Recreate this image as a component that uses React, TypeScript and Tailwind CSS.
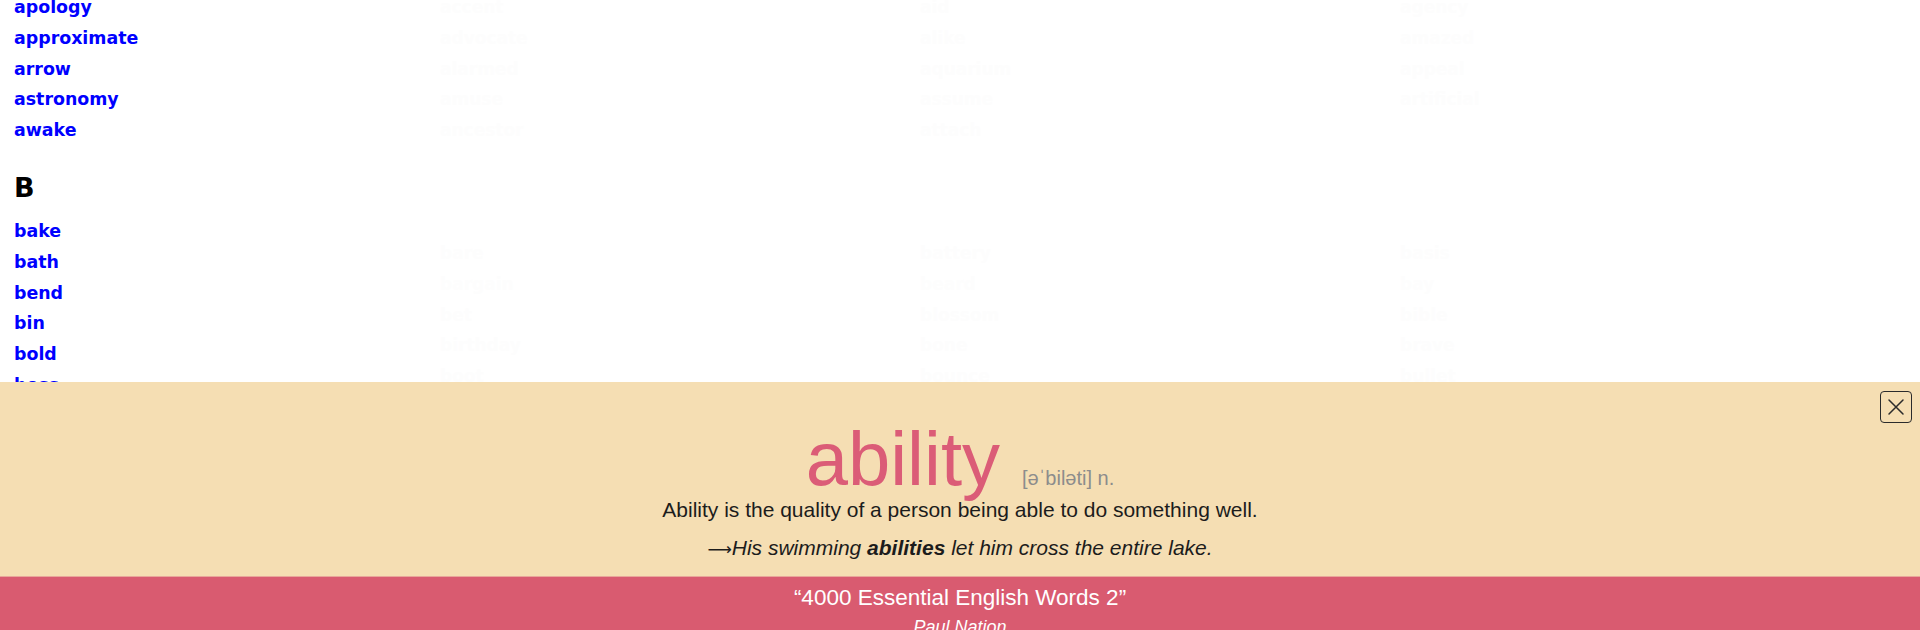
import React from "react";

const aWords = ["apology", "approximate", "arrow", "astronomy", "awake"];
const bWords = ["bake", "bath", "bend", "bin", "bold", "boss", "bother", "bounce", "brick"];

// very faint words behind the page (a washed-out watermark)
const ghostCols = [
  ["accent", "advocate", "alarmed", "amuse", "ancestor", "", "", "", "bare", "bargain", "bet", "birthday", "boot"],
  ["aid", "alike", "aquarium", "assume", "attach", "", "", "", "battery", "beard", "blossom", "bone", "bounce"],
  ["agency", "amazed", "appeal", "artificial", "", "", "", "", "basis", "bay", "bible", "brave", "bullet"],
];

function CloseIcon() {
  return (
    <svg width="18" height="18" viewBox="0 0 18 18" fill="none">
      <path d="M2 2L16 16M16 2L2 16" stroke="#2b2b2b" strokeWidth="1.5" strokeLinecap="round" />
    </svg>
  );
}

export default function App() {
  return (
    <div className="relative h-[630px] w-[1920px] overflow-hidden bg-white">
      <div className="flex">
        {/* word index */}
        <div className="w-[380px] shrink-0 pl-[14px] font-['DejaVu_Sans',sans-serif] -mt-[8px]">
          <ul className="flex flex-col">
            {aWords.map((w) => (
              <li key={w} className="text-[17.4px] font-bold leading-[30.75px] text-[#0000ff]">
                <a href="#">{w}</a>
              </li>
            ))}
          </ul>
          <h3 className="mt-[26px] text-[27px] font-bold leading-[1.164] text-black">B</h3>
          <ul className="mt-[13px] flex flex-col">
            {bWords.map((w) => (
              <li key={w} className="text-[17.4px] font-bold leading-[30.75px] text-[#0000ff]">
                <a href="#">{w}</a>
              </li>
            ))}
          </ul>
        </div>

        {/* faded background columns */}
        <div className="flex flex-1 gap-[330px] pl-[60px] font-['DejaVu_Sans',sans-serif] -mt-[8px]">
          {ghostCols.map((col, i) => (
            <ul key={i} className="flex w-[150px] flex-col">
              {col.map((w, j) => (
                <li key={j} className="h-[30.75px] text-[17px] font-bold leading-[30.75px] text-[#fdfdfd]">
                  {w}
                </li>
              ))}
            </ul>
          ))}
        </div>
      </div>

      {/* word popup */}
      <div className="absolute inset-x-0 top-[382px] font-['Liberation_Sans',Arial,sans-serif]">
        <div className="relative h-[194px] bg-[#f5deb3] pt-[39px] text-center">
          <button className="absolute right-[8px] top-[9px] flex h-[32px] w-[32px] items-center justify-center rounded-[4px] border-[1.5px] border-[#2b2b2b]">
            <CloseIcon />
          </button>
          <div className="flex items-baseline justify-center">
            <span className="text-[76px] leading-none text-[#db5c77]">ability</span>
            <span className="ml-[22px] text-[20px] leading-none text-[#8c8c8c]">[əˈbiləti] n.</span>
          </div>
          <p className="mt-[2px] text-[21px] leading-none text-[#1c1c1c]">
            Ability is the quality of a person being able to do something well.
          </p>
          <p className="mt-[17px] text-[21px] leading-none text-[#1c1c1c]">
            <span className="font-['DejaVu_Sans',sans-serif] text-[17px]">⟶</span>
            <i>His swimming <b>abilities</b> let him cross the entire lake.</i>
          </p>
        </div>
        <div className="h-[120px] border-t border-[#e8a79a] bg-[#d95b70] pt-[10px] text-center text-white">
          <p className="text-[22.5px] leading-none">“4000 Essential English Words 2”</p>
          <p className="mt-[8px] text-[18px] italic leading-none">Paul Nation</p>
        </div>
      </div>
    </div>
  );
}
